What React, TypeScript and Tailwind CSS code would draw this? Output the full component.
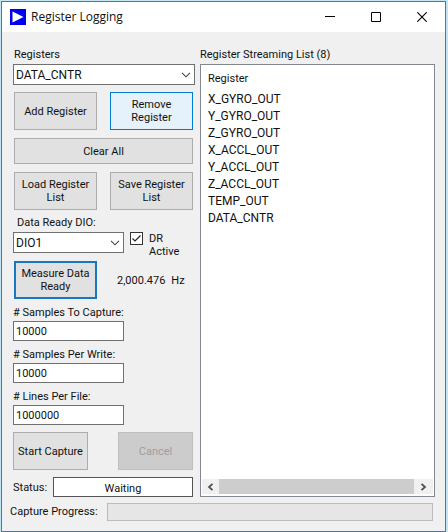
import { useState, type ReactNode } from "react";

const registers = [
  "X_GYRO_OUT",
  "Y_GYRO_OUT",
  "Z_GYRO_OUT",
  "X_ACCL_OUT",
  "Y_ACCL_OUT",
  "Z_ACCL_OUT",
  "TEMP_OUT",
  "DATA_CNTR",
];

type ButtonProps = {
  children: ReactNode;
  className?: string;
  disabled?: boolean;
};

function Button({
  children,
  className = "border border-[#adadad] bg-[#e1e1e1]",
  disabled,
}: ButtonProps) {
  return (
    <button
      type="button"
      disabled={disabled}
      className={`flex h-full w-full items-center justify-center text-center leading-[13px] ${className}`}
    >
      {children}
    </button>
  );
}

function Dropdown({ id, options }: { id: string; options: string[] }) {
  return (
    <div className="grid h-[21px]">
      <select
        id={id}
        className="col-start-1 row-start-1 w-full appearance-none border border-[#707070] bg-white pl-[2px] text-xs leading-[16px] outline-none"
      >
        {options.map((option) => (
          <option key={option}>{option}</option>
        ))}
      </select>
      <svg
        viewBox="0 0 10 6"
        className="pointer-events-none col-start-1 row-start-1 mr-1 h-[6px] w-[10px] self-center justify-self-end"
        fill="none"
        stroke="#444"
        strokeWidth="1.1"
      >
        <path d="M1 .8 5 4.8 9 .8" />
      </svg>
    </div>
  );
}

function NumberField({ id, label, initial }: { id: string; label: string; initial: string }) {
  const [value, setValue] = useState(initial);
  return (
    <div className="w-[111px]">
      <label htmlFor={id} className="flex h-[22px] items-end whitespace-nowrap leading-[16px]">
        {label}
      </label>
      <input
        id={id}
        value={value}
        onChange={(e) => setValue(e.target.value)}
        className="block h-5 w-full border border-[#707070] bg-white px-[2px] leading-[16px] outline-none"
      />
    </div>
  );
}

function TitleBar() {
  return (
    <header className="flex h-[30px] items-center bg-white pl-2">
      <svg viewBox="0 0 16 16" className="h-4 w-4">
        <rect width="16" height="16" fill="#0000f0" />
        <path d="M2.500 2.500 13.500 8 2.500 13.500z" fill="#fff" />
      </svg>
      <h1 className="flex-1 pl-[5px] font-['Open_Sans',sans-serif] text-xs">Register Logging</h1>
      <button type="button" aria-label="Minimize" className="flex h-full w-[46px] items-center justify-center">
        <svg viewBox="0 0 10 10" className="h-[10px] w-[10px]" stroke="#000">
          <path d="M0 4.500h10" />
        </svg>
      </button>
      <button type="button" aria-label="Maximize" className="flex h-full w-[46px] items-center justify-center">
        <svg viewBox="0 0 10 10" className="h-[10px] w-[10px]" fill="none" stroke="#000">
          <path d="M.5 .5h9v9h-9z" />
        </svg>
      </button>
      <button type="button" aria-label="Close" className="flex h-full w-[46px] items-center justify-center">
        <svg viewBox="0 0 10 10" className="h-[10px] w-[10px]" stroke="#000" strokeWidth="1.1">
          <path d="M.3 .3 9.7 9.7M9.7 .3 .3 9.7" />
        </svg>
      </button>
    </header>
  );
}

function Controls() {
  const [active, setActive] = useState(true);
  return (
    <section className="w-[182px] shrink-0">
      <label htmlFor="registers" className="block h-4 pl-px">
        Registers
      </label>
      <Dropdown id="registers" options={["DATA_CNTR", ...registers.slice(0, 7)]} />

      <div className="mt-[7px] grid grid-cols-[83px_83px] justify-between gap-y-2 pl-px pr-[2px]">
        <div className="h-[38px]">
          <Button>Add Register</Button>
        </div>
        <div className="h-[38px]">
          <Button className="border border-[#0078d7] bg-[#e5f1fb]">
            Remove
            <br />
            Register
          </Button>
        </div>
        <div className="col-span-2 h-[26px]">
          <Button>Clear All</Button>
        </div>
        <div className="h-[38px]">
          <Button>
            Load Register
            <br />
            List
          </Button>
        </div>
        <div className="h-[38px]">
          <Button>
            Save Register
            <br />
            List
          </Button>
        </div>
      </div>

      <label htmlFor="dio" className="flex h-[22px] items-center pl-1 pt-1">
        Data Ready DIO:
      </label>
      <div className="flex h-[21px] items-start">
        <div className="w-[111px]">
          <Dropdown id="dio" options={["DIO1", "DIO2", "DIO3", "DIO4"]} />
        </div>
        <label className="flex items-start pl-[6px] leading-[13px]">
          <span className="grid h-[13px] w-[13px]">
            <input
              type="checkbox"
              checked={active}
              onChange={(e) => setActive(e.target.checked)}
              className="col-start-1 row-start-1 h-[13px] w-[13px] appearance-none border border-[#333] bg-white"
            />
            {active && (
              <svg
                viewBox="0 0 13 13"
                className="pointer-events-none col-start-1 row-start-1 h-[13px] w-[13px]"
                fill="none"
                stroke="#222"
                strokeWidth="1.2"
              >
                <path d="M2.5 6.5 5 9 10.5 3.5" />
              </svg>
            )}
          </span>
          <span className="pl-[6px]">
            DR
            <br />
            Active
          </span>
        </label>
      </div>

      <div className="mt-2 flex items-center pl-px">
        <div className="h-[38px] w-[83px]">
          <Button className="border-2 border-[#1a76c0] bg-[#e1e1e1]">
            Measure Data
            <br />
            Ready
          </Button>
        </div>
        <output className="flex gap-[6px] pl-5 pt-[2px]">
          <span>2,000.476</span>
          <span>Hz</span>
        </output>
      </div>

      <NumberField id="samples" label="# Samples To Capture:" initial="10000" />
      <NumberField id="per-write" label="# Samples Per Write:" initial="10000" />
      <NumberField id="per-file" label="# Lines Per File:" initial="1000000" />

      <div className="mt-[7px] flex justify-between pr-[2px]">
        <div className="h-[38px] w-[75px]">
          <Button>Start Capture</Button>
        </div>
        <div className="h-[38px] w-[75px]">
          <Button disabled className="border border-[#bfbfbf] bg-[#cccccc] text-[#9d9d9d]">
            Cancel
          </Button>
        </div>
      </div>

      <div className="mt-[7px] flex items-center pr-[2px]">
        <label htmlFor="status" className="w-10 pt-[2px]">
          Status:
        </label>
        <input
          id="status"
          readOnly
          value="Waiting"
          className="h-5 min-w-0 flex-1 border border-[#555] bg-white pt-[2px] text-center outline-none"
        />
      </div>
    </section>
  );
}

function StreamingList() {
  return (
    <section className="flex min-w-0 flex-1 flex-col">
      <h2 className="h-4">Register Streaming List (8)</h2>
      <div className="flex flex-1 flex-col border border-[#828790] bg-white p-px">
        <table className="text-left">
          <thead>
            <tr>
              <th className="h-[25px] p-0 pl-[6px] font-normal leading-[16px]">Register</th>
            </tr>
          </thead>
          <tbody>
            {registers.map((name) => (
              <tr key={name}>
                <td className="h-[17px] p-0 pl-[6px] text-xs leading-[17px]">{name}</td>
              </tr>
            ))}
          </tbody>
        </table>
        <div className="mb-px mt-auto flex h-[15px] bg-[#f0f0f0]">
          <button type="button" aria-label="Scroll left" className="flex w-[17px] items-center justify-center">
            <svg viewBox="0 0 7 8" className="h-2 w-[7px]" fill="none" stroke="#505050" strokeWidth="1.8">
              <path d="M5.5 .8 2 4l3.500 3.200" />
            </svg>
          </button>
          <div className="flex-1 bg-[#cdcdcd]" />
          <button type="button" aria-label="Scroll right" className="flex w-[19px] items-center justify-center">
            <svg viewBox="0 0 7 8" className="h-2 w-[7px]" fill="none" stroke="#505050" strokeWidth="1.8">
              <path d="M1.500 .8 5 4 1.500 7.200" />
            </svg>
          </button>
        </div>
      </div>
    </section>
  );
}

export default function App() {
  return (
    <div className="bg-[#c3e6f5] pl-px pr-[2px] pt-px font-[Roboto,sans-serif] text-[11px] leading-[14px] text-[#111]">
      <main className="border border-[#2b83b8] bg-[#f0f0f0]">
        <TitleBar />
        <div className="flex gap-[5px] pl-[11px] pr-[10px] pt-4">
          <Controls />
          <StreamingList />
        </div>
        <div className="mb-[10px] mt-[6px] flex items-center pl-2 pr-3">
          <span id="progress-label" className="w-[97px]">
            Capture Progress:
          </span>
          <div
            role="progressbar"
            aria-labelledby="progress-label"
            aria-valuenow={0}
            className="h-[18px] flex-1 border border-[#bcbcbc] bg-[#e6e6e6]"
          />
        </div>
      </main>
    </div>
  );
}
